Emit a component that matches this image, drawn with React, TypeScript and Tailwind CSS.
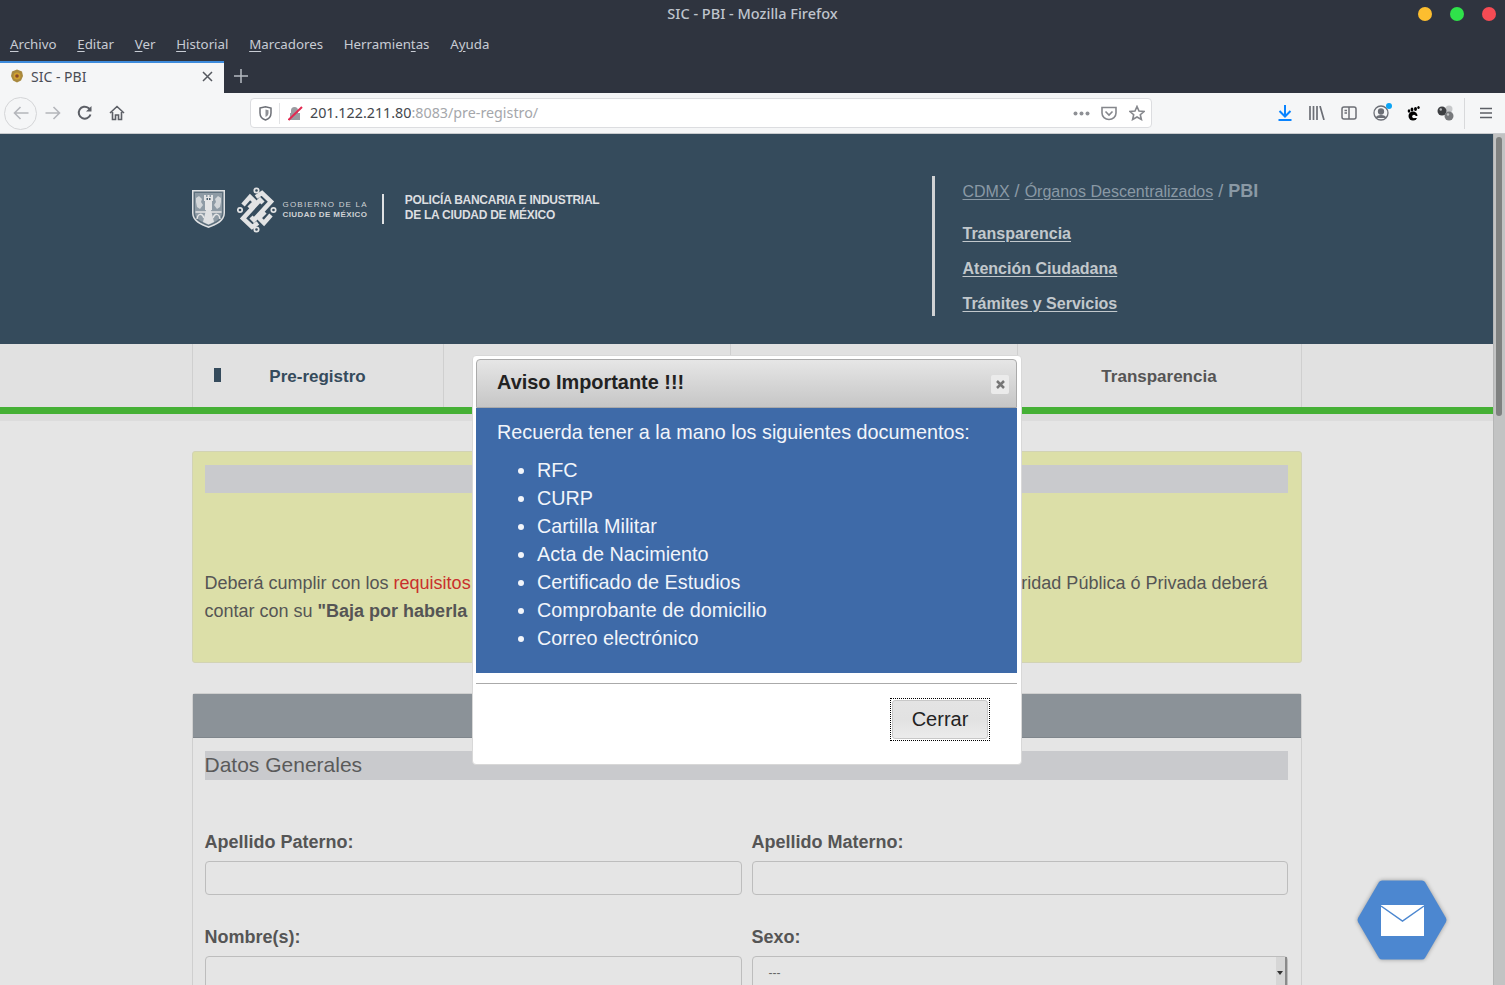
import React from "react";

const ui = "font-['Noto_Sans','Liberation_Sans',sans-serif]";
const web = "font-['Liberation_Sans',Arial,sans-serif]";

function Menu({ pre, u, post }: { pre?: string; u: string; post?: string }) {
  return (
    <span>
      {pre}
      <span className="underline underline-offset-2">{u}</span>
      {post}
    </span>
  );
}

function Tool({ children, w = "w-8" }: { children: React.ReactNode; w?: string }) {
  return <div className={`${w} h-8 flex items-center justify-center shrink-0`}>{children}</div>;
}

function Shield() {
  return (
    <svg width="35" height="40" viewBox="0 0 35 40" fill="none" className="shrink-0 -translate-x-px -translate-y-px">
      <path d="M1 1H34V24C34 32 26 36 17.500 39C9 36 1 32 1 24Z" fill="#dfe1e3" />
      <path d="M2.500 2.500H32.500V24C32.500 31 25 34.500 17.500 37.300C10 34.500 2.500 31 2.500 24Z" fill="#5d6f7c" />
      <path d="M4 4H31V23.500C31 30 24.500 33 17.500 35.700C10.500 33 4 30 4 23.500Z" fill="#8e9ba5" />
      <path d="M13 6h2v2h1.500V6h2v2H20V6h2v6h-1v9h-7v-9h-1z" fill="#e4e5e6" />
      <path d="M15.500 9h1.500v2h-1.500zM18 9h1.500v2H18z" fill="#4a5e6d" />
      <path d="M5 9l3-2 3 3-1 3 2 3-3 4-3-2-1-5zM30 9l-3-2-3 3 1 3-2 3 3 4 3-2 1-5z" fill="#d2d6d9" />
      <path d="M4.500 23h26" stroke="#e4e5e6" strokeWidth="1.500" />
      <path d="M6 30c1-6 5-6 7-1M22 29c2-5 6-5 7 1" stroke="#e4e5e6" strokeWidth="1.500" />
      <path d="M15 21h5l3 12-5.500 2.500L12 33z" fill="#dfe1e3" />
    </svg>
  );
}

function Knot() {
  return (
    <svg width="40" height="46" viewBox="0 0 40 46" fill="none" className="shrink-0">
      <g stroke="#e2e3e4" strokeWidth="1.700">
        <circle cx="19.500" cy="3.500" r="2.200" />
        <circle cx="19.500" cy="42.500" r="2.200" />
        <circle cx="3" cy="23" r="2.200" />
        <circle cx="36.500" cy="23" r="2.200" />
      </g>
      <g stroke="#e2e3e4" strokeWidth="4.500" strokeLinejoin="miter">
        <path d="M6 18L13 10L18 15L12 21" />
        <path d="M19 10L25 6L34 14.500L17 33L14 30" />
        <path d="M34 28L27 36L22 31L28 25" />
        <path d="M21 36L15 40L6 31.500L23 13L26 16" />
      </g>
    </svg>
  );
}

function Field({ label, children }: { label: string; children?: React.ReactNode }) {
  return (
    <div className="flex flex-col">
      <label className="text-[18px] leading-[20px] font-bold text-[#555] mb-[9px]">{label}</label>
      {children ?? <div className="h-[34px] border border-[#bdbdbd] rounded-[4px]" />}
    </div>
  );
}

export default function App() {
  return (
    <div className={`w-[1505px] h-[985px] overflow-hidden flex flex-col bg-[#e5e5e5] ${web}`}>
      {/* Window chrome */}
      <div className={`bg-[#2f343f] text-[#c8ccd4] ${ui} shrink-0`}>
        <div className="relative h-[28px] flex items-center justify-center pb-[1px] text-[14.500px] font-medium text-[#bfc4cd]">
          SIC - PBI - Mozilla Firefox
          <div className="absolute right-[9px] top-[7px] flex gap-[18px]">
            <span className="w-[14px] h-[14px] rounded-full bg-[#fdbe2f]" />
            <span className="w-[14px] h-[14px] rounded-full bg-[#2fe24a]" />
            <span className="w-[14px] h-[14px] rounded-full bg-[#f64b54]" />
          </div>
        </div>
        <div className="h-[33px] flex items-center gap-[20.700px] pl-[10px] text-[13.300px] leading-none">
          <Menu u="A" post="rchivo" />
          <Menu u="E" post="ditar" />
          <Menu u="V" post="er" />
          <Menu u="H" post="istorial" />
          <Menu u="M" post="arcadores" />
          <Menu pre="Herramien" u="t" post="as" />
          <Menu pre="A" u="y" post="uda" />
        </div>
        <div className="h-[32px] flex items-stretch text-[14px]">
          <div className="w-[224px] bg-[#f5f6f7] border-t-2 border-[#3d8bdc] flex items-center pl-[10px] pr-[11px] pb-[4px] text-[#4a4d55]">
            <svg width="14" height="14" viewBox="0 0 14 14" className="shrink-0">
              <path d="M7 0.500L12 2.500L13 7L11 11.500L7 13.500L3 11.500L1 7L2 2.500Z" fill="#a8893f" />
              <circle cx="7" cy="7" r="3.500" fill="#d0a02f" />
              <circle cx="7" cy="7" r="1.800" fill="#8a4a2a" />
            </svg>
            <span className="ml-[7px] flex-1">SIC - PBI</span>
            <svg width="11" height="11" viewBox="0 0 11 11" stroke="#55585f" strokeWidth="1.500">
              <path d="M1 1L10 10M10 1L1 10" />
            </svg>
          </div>
          <div className="w-[34px] flex items-center justify-center pb-[2px]">
            <svg width="14" height="14" viewBox="0 0 14 14" stroke="#b6bac2" strokeWidth="1.500">
              <path d="M7 0V14M0 7H14" />
            </svg>
          </div>
        </div>
      </div>

      {/* Toolbar */}
      <div className="h-[41px] shrink-0 bg-[#f5f6f7] border-b border-[#c9cbce] flex items-center pl-[4px] text-[#5c5f66]">
        <div className="w-[33px] h-[33px] rounded-full border border-[#d4d5d7] flex items-center justify-center shrink-0">
          <svg width="16" height="14" viewBox="0 0 16 14" fill="none" stroke="#b4b6bb" strokeWidth="1.600">
            <path d="M15.500 7H1.500M7.500 1L1.500 7L7.500 13" />
          </svg>
        </div>
        <Tool>
          <svg width="16" height="14" viewBox="0 0 16 14" fill="none" stroke="#b4b6bb" strokeWidth="1.600">
            <path d="M0.500 7H14.500M8.500 1L14.500 7L8.500 13" />
          </svg>
        </Tool>
        <Tool>
          <svg width="16" height="16" viewBox="0 0 16 16" fill="none" stroke="#5c5f66" strokeWidth="2">
            <path d="M13.500 9.500A6 6 0 1 1 11.500 3L13.500 5" />
            <path d="M14.500 1V6.500H9" fill="#5c5f66" stroke="none" />
          </svg>
        </Tool>
        <Tool>
          <svg width="16" height="16" viewBox="0 0 16 16" fill="none" stroke="#5c5f66" strokeWidth="1.600">
            <path d="M1 8L8 1.500L15 8M3.500 7V14.500H6.500V10H9.500V14.500H12.500V7" />
          </svg>
        </Tool>
        <div className={`ml-[117px] w-[902px] h-[30px] bg-white border border-[#dcdde0] rounded-[4px] flex items-center shrink-0 ${ui}`}>
          <div className="w-[29px] flex items-center justify-center border-r border-[#e2e3e5] h-[21px]">
            <svg width="13" height="15" viewBox="0 0 13 15" fill="none">
              <path d="M1 2L6.500 0.800L12 2V7C12 10.500 9.500 13 6.500 14C3.500 13 1 10.500 1 7Z" stroke="#6d7077" strokeWidth="1.500" />
              <path d="M6.500 3.500L9.500 4.200V7C9.500 8.800 8.200 10.300 6.500 11Z" fill="#8f9196" />
            </svg>
          </div>
          <div className="w-[30px] flex items-center justify-center">
            <svg width="15" height="15" viewBox="0 0 15 15" fill="none">
              <path d="M3 7V4.500a3.500 3.500 0 0 1 7 0V7h2v7H2V7z" fill="#9a9ca1" />
              <path d="M0.500 14L14 1" stroke="#e22850" strokeWidth="2" />
            </svg>
          </div>
          <span className="text-[14.300px] text-[#44474d]">
            201.122.211.80<span className="text-[#a5a7ab]">:8083/pre-registro/</span>
          </span>
          <div className="flex-1" />
          <svg width="17" height="5" viewBox="0 0 17 5" fill="#8e9095" className="mr-[11px]">
            <circle cx="2.500" cy="2.500" r="2" />
            <circle cx="8.500" cy="2.500" r="2" />
            <circle cx="14.500" cy="2.500" r="2" />
          </svg>
          <svg width="16" height="15" viewBox="0 0 16 15" fill="none" stroke="#85878c" strokeWidth="1.600" className="mr-[12px]">
            <path d="M1 1.500H15V7A7 6.500 0 0 1 1 7Z" />
            <path d="M4.500 5.500L8 9L11.500 5.500" />
          </svg>
          <svg width="16" height="16" viewBox="0 0 16 16" fill="none" stroke="#85878c" strokeWidth="1.600" className="mr-[6px]">
            <path d="M8 1.500L10 6L15 6.500L11.300 9.700L12.400 14.500L8 12L3.600 14.500L4.700 9.700L1 6.500L6 6Z" />
          </svg>
        </div>
        <div className="ml-[117px] flex items-center">
          <Tool>
            <svg width="14" height="16" viewBox="0 0 14 16" fill="none" stroke="#0a84ff" strokeWidth="2">
              <path d="M7 0V11M1.500 6L7 11.500L12.500 6M0.500 15H13.500" />
            </svg>
          </Tool>
          <Tool>
            <svg width="16" height="14" viewBox="0 0 16 14" fill="none" stroke="#6c6f76" strokeWidth="1.700">
              <path d="M1 0V14M4.500 0V14M8 0V14M11 0L15 14" />
            </svg>
          </Tool>
          <Tool>
            <svg width="16" height="14" viewBox="0 0 16 14" fill="none" stroke="#6c6f76" strokeWidth="1.500">
              <rect x="1" y="1" width="14" height="12" rx="2" />
              <path d="M8 1V13M3.500 4.500H6M3.500 7H6" />
            </svg>
          </Tool>
          <Tool>
            <div className="relative w-[16px] h-[16px]">
              <svg width="16" height="16" viewBox="0 0 16 16" fill="none" stroke="#6c6f76" strokeWidth="1.300">
                <circle cx="8" cy="8" r="7" />
                <circle cx="8" cy="6.500" r="2.500" fill="#6c6f76" />
                <path d="M3.500 13C4 10 12 10 12.500 13" fill="#6c6f76" />
              </svg>
              <span className="absolute -top-[2px] -right-[3px] w-[6px] h-[6px] rounded-full bg-[#0ca4f5]" />
            </div>
          </Tool>
          <Tool>
            <svg width="13" height="15" viewBox="0 0 13 15" fill="#000">
              <ellipse cx="6" cy="10" rx="4.500" ry="4.500" />
              <circle cx="7" cy="10.500" r="1.800" fill="#f5f6f7" />
              <rect x="7" y="10" width="5" height="2" fill="#f5f6f7" />
              <ellipse cx="2" cy="5" rx="1.300" ry="1.800" />
              <ellipse cx="5" cy="3.500" rx="1.400" ry="1.900" />
              <ellipse cx="8.500" cy="3" rx="1.500" ry="2" />
              <ellipse cx="11.500" cy="1.500" rx="1.200" ry="1.500" />
            </svg>
          </Tool>
          <Tool>
            <svg width="17" height="16" viewBox="0 0 17 16">
              <circle cx="12" cy="4" r="3.500" fill="#c6c8ca" />
              <circle cx="5" cy="6" r="4.500" fill="#3d3f42" />
              <circle cx="12" cy="11" r="4.500" fill="#77797c" />
              <circle cx="3.800" cy="4.500" r="1.200" fill="#b5b7b9" />
              <circle cx="11" cy="9.500" r="1.200" fill="#c0c2c4" />
            </svg>
          </Tool>
          <div className="w-px h-[31px] bg-[#d8d9db] ml-[3px]" />
          <div className="ml-[15px]">
            <svg width="12" height="12" viewBox="0 0 12 12" stroke="#5c5f66" strokeWidth="1.700">
              <path d="M0 1.500H12M0 6H12M0 10.500H12" />
            </svg>
          </div>
        </div>
      </div>

      {/* Page viewport */}
      <div className="relative flex-1 flex min-h-0">
        <div className="flex-1 min-w-0 overflow-hidden">
          <header className="h-[210px] bg-[#354b5c]">
            <div className="w-[1110px] mx-auto flex pt-[42px]">
              <div className="w-[740px] flex items-start">
                <div className="pt-[14px]"><Shield /></div>
                <div className="ml-[10px] pt-[11px]"><Knot /></div>
                <div className="ml-[6px] pt-[24px] text-[#cfd2d5] text-[8px] leading-[10px] whitespace-nowrap">
                  <div className="tracking-[1.200px]">GOBIERNO DE LA</div>
                  <div className="font-bold tracking-[0.420px]">CIUDAD DE MÉXICO</div>
                </div>
                <div className="ml-[14px] mt-[18px] w-[2px] h-[30px] bg-[#dfe1e3]" />
                <div className="ml-[21px] pt-[17px] text-[12px] leading-[15px] font-bold text-[#dcdee0] tracking-[-0.270px] whitespace-nowrap">
                  <div>POLICÍA BANCARIA E INDUSTRIAL</div>
                  <div>DE LA CIUDAD DE MÉXICO</div>
                </div>
              </div>
              <div className="border-l-[3px] border-[#d0d2d4] h-[140px] pl-[28px]">
                <div className="text-[18px] leading-[30px] text-[#8a99a5]">
                  <span className="text-[16px] underline underline-offset-2">CDMX</span> /{" "}
                  <span className="text-[16px] underline underline-offset-2">Órganos Descentralizados</span> /{" "}
                  <span className="font-bold">PBI</span>
                </div>
                <div className="mt-[17px] flex flex-col gap-[15px] text-[16px] leading-[20px] font-bold text-[#c2c8cc] underline underline-offset-2">
                  <span>Transparencia</span>
                  <span>Atención Ciudadana</span>
                  <span>Trámites y Servicios</span>
                </div>
              </div>
            </div>
          </header>

          <nav className="h-[63px] bg-[#e1e1e1]">
            <div className="w-[1110px] h-full mx-auto flex border-x border-[#cfcfcf] text-[17px] font-bold">
              <div className="relative w-[251px] border-r border-[#cfcfcf] flex items-center justify-center pt-[2px] text-[#354b5c]">
                <span className="absolute left-[21px] top-[24px] w-[7px] h-[14px] bg-[#354b5c]" />
                Pre-registro
              </div>
              <div className="w-[287px] border-r border-[#cfcfcf]" />
              <div className="w-[287px] border-r border-[#cfcfcf]" />
              <div className="flex-1 flex items-center justify-center pt-[2px] text-[#555]">Transparencia</div>
            </div>
          </nav>
          <div className="h-[7px] bg-[#45b035]" />
          <div className="h-[7px] bg-[#dcdcdc]" />

          <main className="w-[1110px] mx-auto pt-[30px] text-[18px] text-[#555]">
            <section className="h-[212px] bg-[#dcdfa8] border border-[#d2d3b4] rounded-[3px] pl-[12px] pr-[13px] pt-[13px]">
              <div className="h-[28px] bg-[#c9cacd]" />
              <div className="mt-[76px] leading-[28px] whitespace-nowrap">
                <div className="flex justify-between pr-[20px]">
                  <span>
                    Deberá cumplir con los <span className="text-[#c9302c]">requisitos</span>
                  </span>
                  <span>ridad Pública ó Privada deberá</span>
                </div>
                <div>
                  contar con su <strong>"Baja por haberla</strong>
                </div>
              </div>
            </section>

            <section className="mt-[30px] border border-[#cfcfcf] rounded-t-[3px] h-[400px]">
              <div className="h-[44px] bg-[#8b9298] border-b border-[#7f868c]" />
              <div className="pl-[12px] pr-[13px] pt-[13px]">
                <div className="h-[29px] bg-[#c9cacd] text-[21px] leading-[28px] text-[#5a5a5a]">Datos Generales</div>
                <div className="mt-[52px] grid grid-cols-[537px_536px] gap-x-[10px] gap-y-[32px]">
                  <Field label="Apellido Paterno:" />
                  <Field label="Apellido Materno:" />
                  <Field label="Nombre(s):" />
                  <Field label="Sexo:">
                    <div className="relative h-[34px] border border-[#bdbdbd] rounded-[4px] pl-[16px] text-[12px] leading-[32px] text-[#666]">
                      ---
                      <div className="absolute top-0 right-0 bottom-0 w-[11px] bg-[#d6d6d6] border-r-2 border-[#8a8a8a] flex items-center justify-center">
                        <span className="w-0 h-0 border-x-[3px] border-x-transparent border-t-[4px] border-t-[#333]" />
                      </div>
                    </div>
                  </Field>
                </div>
              </div>
            </section>
          </main>
        </div>

        {/* Scrollbar */}
        <div className="w-[12px] shrink-0 bg-[#c2c3c3] border-l border-[#b5b6b6] pt-[3px] pl-[2px]">
          <div className="w-[6px] h-[279px] bg-[#7f8180] rounded-full" />
        </div>

        {/* Modal */}
        <div className="absolute left-[472px] top-[221px] w-[550px] h-[410px] bg-white border border-[#d8d8d8] rounded-[4px] pl-[3px] pr-[4px] py-[3px] flex flex-col">
          <div className="relative h-[49px] shrink-0 bg-gradient-to-b from-[#e6e6e6] to-[#c6c6c6] border border-[#aaaaaa] rounded-t-[4px] flex items-center pl-[20px] pb-[1px] text-[19.900px] font-bold text-[#222]">
            Aviso Importante !!!
            <div className="absolute right-[7px] top-[15px] w-[18px] h-[19px] bg-[#ebebeb] rounded-[2px] flex items-center justify-center">
              <svg width="9" height="9" viewBox="0 0 9 9" stroke="#777" strokeWidth="2.500">
                <path d="M1 1L8 8M8 1L1 8" />
              </svg>
            </div>
          </div>
          <div className="h-[265px] shrink-0 bg-[#3e6aa8] text-[#f2f5fa] text-[19.800px] pl-[21px] pt-[10px]">
            <p className="leading-[28px]">Recuerda tener a la mano los siguientes documentos:</p>
            <ul className="mt-[10px] pl-[40px] leading-[28px] list-disc list-outside">
              <li>RFC</li>
              <li>CURP</li>
              <li>Cartilla Militar</li>
              <li>Acta de Nacimiento</li>
              <li>Certificado de Estudios</li>
              <li>Comprobante de domicilio</li>
              <li>Correo electrónico</li>
            </ul>
          </div>
          <div className="mt-[10px] border-t border-[#aaaaaa] flex justify-end pt-[14px] pr-[27px]">
            <button className="w-[100px] h-[43px] border border-dotted border-black p-px">
              <span className="block w-full h-full bg-gradient-to-b from-[#e4e4e4] via-[#e2e2e2] to-[#ebebeb] border border-[#c8c8c8] rounded-[3px] text-[20px] leading-[37px] text-[#222]">
                Cerrar
              </span>
            </button>
          </div>
        </div>

        {/* Floating mail button */}
        <div className="absolute left-[1355px] top-[745px]">
          <svg width="94" height="82" viewBox="0 0 94 82" className="drop-shadow-[0_0_2px_rgba(0,0,0,0.350)]">
            <path d="M24 3Q25 1.500 27 1.500H67Q69 1.500 70 3L91 39Q92 41 91 43L70 79Q69 80.500 67 80.500H27Q25 80.500 24 79L3 43Q2 41 3 39Z" fill="#4c87d0" />
            <rect x="26" y="26" width="43" height="31" fill="#fff" />
            <path d="M26 27L47.500 42L69 27" fill="none" stroke="#4c87d0" strokeWidth="1.500" />
          </svg>
        </div>
      </div>
    </div>
  );
}
